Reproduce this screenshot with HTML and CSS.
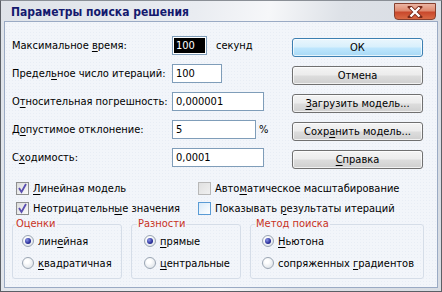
FILE: index.html
```html
<!DOCTYPE html>
<html lang="ru">
<head>
<meta charset="utf-8">
<title>Параметры поиска решения</title>
<link rel="stylesheet" href="styles.css">
</head>
<body>
<div class="window">
  <div class="titlebar">
    <div class="title">Параметры поиска решения</div>
    <div class="close">
      <svg width="16" height="12" viewBox="0 0 16 12"><path d="M3 1 L13 11 M13 1 L3 11" stroke="#7a2a1a" stroke-width="4" stroke-linecap="square"/><path d="M3.5 1.5 L12.5 10.5 M12.5 1.5 L3.5 10.5" stroke="#fff" stroke-width="2.4"/></svg>
    </div>
  </div>
  <div class="body">
    <div class="top">
      <div class="fields">
        <div class="row"><span class="label">Максимальное <u>в</u>ремя:</span><span class="input w1"><span class="sel">100</span></span><span class="unit">секунд</span></div>
        <div class="row"><span class="label">Предел<u>ь</u>ное число итераций:</span><span class="input w2">100</span></div>
        <div class="row"><span class="label">О<u>т</u>носительная погрешность:</span><span class="input w3">0,000001</span></div>
        <div class="row"><span class="label">Д<u>о</u>пустимое отклонение:</span><span class="input w4">5</span><span class="pct">%</span></div>
        <div class="row"><span class="label">С<u>х</u>одимость:</span><span class="input w3">0,0001</span></div>
      </div>
      <div class="buttons">
        <div class="btn default">ОК</div>
        <div class="btn">Отмена</div>
        <div class="btn"><u>З</u>агрузить модель...</div>
        <div class="btn">Сохр<u>а</u>нить модель...</div>
        <div class="btn"><u>С</u>правка</div>
      </div>
    </div>
    <div class="checks">
      <div class="col1">
        <div class="chk"><span class="box on"><svg width="11" height="11" viewBox="0 0 11 11"><path d="M2 5 L4.5 9 L9 1" fill="none" stroke="#5a4fb0" stroke-width="1.8"/></svg></span><span><u>Л</u>инейная модель</span></div>
        <div class="chk"><span class="box on"><svg width="11" height="11" viewBox="0 0 11 11"><path d="M2 5 L4.5 9 L9 1" fill="none" stroke="#5a4fb0" stroke-width="1.8"/></svg></span><span>Неотрицательн<u>ы</u>е значения</span></div>
      </div>
      <div class="col2">
        <div class="chk"><span class="box dis"></span><span>Авто<u>м</u>атическое масштабирование</span></div>
        <div class="chk"><span class="box hot"></span><span>Показывать <u>р</u>езультаты итераций</span></div>
      </div>
    </div>
    <div class="groups">
      <fieldset class="grp g1">
        <legend>Оценки</legend>
        <div class="rad"><span class="dot on"></span><span>лин<u>е</u>йная</span></div>
        <div class="rad"><span class="dot"></span><span><u>к</u>вадратичная</span></div>
      </fieldset>
      <fieldset class="grp g2">
        <legend>Разности</legend>
        <div class="rad"><span class="dot on"></span><span><u>п</u>рямые</span></div>
        <div class="rad"><span class="dot"></span><span><u>ц</u>ентральные</span></div>
      </fieldset>
      <fieldset class="grp g3">
        <legend>Метод поиска</legend>
        <div class="rad"><span class="dot on"></span><span><u>Н</u>ьютона</span></div>
        <div class="rad"><span class="dot"></span><span>сопряженных <u>г</u>радиентов</span></div>
      </fieldset>
    </div>
  </div>
</div>
</body>
</html>
```
FILE: styles.css
```css
* { box-sizing: border-box; }
html, body { margin: 0; padding: 0; }
body {
  width: 442px;
  height: 292px;
  overflow: hidden;
  font-family: "DejaVu Sans Condensed", "Liberation Sans", Arial, sans-serif;
  font-size: 11px;
  color: #000;
  background: #fff;
  white-space: nowrap;
}
u { text-decoration: underline; text-underline-offset: 2px; }
.window {
  width: 442px;
  height: 292px;
  border: 1px solid #5b5f66;
  border-top-color: #8a8f96;
  background: linear-gradient(100deg, #dfe3e9 0%, #e9ecf1 40%, #f6f7f9 55%, #dde1e7 70%, #d7dce3 100%);
  padding: 0 3px 3px 3px;
  display: flex;
  flex-direction: column;
}
.titlebar {
  height: 20px;
  display: flex;
  align-items: flex-start;
  justify-content: space-between;
  flex: none;
}
.title {
  padding-left: 7px;
  padding-top: 4px;
  font-weight: bold;
  font-size: 12px;
  line-height: 14px;
  color: #14196e;
}
.close {
  margin-top: 2px;
  margin-right: 2px;
  width: 42px;
  height: 17px;
  border: 1px solid #86402f;
  border-radius: 0 0 4px 4px;
  background: linear-gradient(#ebb5a3 0%, #df8a70 45%, #c9482c 55%, #d96a45 100%);
  display: flex;
  align-items: center;
  justify-content: center;
}
.body {
  flex: 1;
  border: 1px solid #9aaac4;
  background-color: #f2f5fa;
  background-image: radial-gradient(#e8edf5 0.6px, transparent 0.7px);
  background-size: 3px 3px;
  padding: 9px 0 0 7px;
}
.top { display: flex; }
.fields { width: 280px; display: flex; flex-direction: column; }
.row { height: 28px; display: flex; align-items: center; }
.label { width: 160px; flex: none; }
.input {
  height: 19px;
  border: 1px solid #7f9db9;
  background: #fff;
  padding-left: 3px;
  line-height: 17px;
}
.w1 { width: 35px; padding: 1px; }
.w2 { width: 50px; }
.w3 { width: 92px; }
.w4 { width: 84px; }
.sel {
  display: block;
  background: #000;
  color: #fff;
  height: 15px;
  line-height: 15px;
  padding-left: 2px;
}
.unit { margin-left: 9px; }
.pct { margin-left: 3px; }
.buttons {
  padding-top: 7px;
  display: flex;
  flex-direction: column;
  gap: 9px;
}
.btn {
  width: 131px;
  height: 19px;
  border: 1px solid #707070;
  border-radius: 3px;
  background: linear-gradient(#f4f4f4 0%, #ececec 45%, #dcdcdc 55%, #cfcfcf 100%);
  box-shadow: inset 0 0 0 1px rgba(255,255,255,0.7);
  text-align: center;
  line-height: 17px;
}
.btn.default {
  border-color: #3c7fb1;
  background: linear-gradient(#eaf6fd 0%, #d9f0fc 45%, #bee6fd 55%, #a7d9f5 100%);
}
.checks {
  display: flex;
  margin-top: 7px;
  padding-left: 4px;
}
.col1 { width: 182px; }
.chk { height: 20px; display: flex; align-items: center; }
.box {
  width: 13px;
  height: 13px;
  flex: none;
  margin-right: 4px;
  border: 1px solid #8e8f8f;
  background: linear-gradient(135deg, #dcdcdc, #fbfbfb);
  display: flex;
  align-items: center;
  justify-content: center;
}
.box.dis { border-color: #b8b8b8; background: linear-gradient(135deg, #e0e0e0, #f0f0f0); }
.box.hot { border-color: #5a9bd5; background: linear-gradient(135deg, #d8eaf9, #ffffff); }
.groups {
  display: flex;
  margin-top: 0;
  gap: 9px;
}
.grp {
  margin: 0;
  border: 1px solid #d5dde8;
  border-radius: 3px;
  padding: 0 0 1px 9px;
  height: 61px;
}
.grp legend {
  color: #c8321e;
  padding: 0 1px;
  margin-left: -7px;
  line-height: 12px;
}
.g1 { width: 110px; }
.g2 { width: 110px; padding-left: 12px; }
.g3 { width: 174px; padding-left: 11px; }
.rad { height: 22px; display: flex; align-items: center; }
.dot {
  width: 12px;
  height: 12px;
  flex: none;
  margin-right: 4px;
  border-radius: 50%;
  border: 1px solid #9aa5b3;
  background: radial-gradient(circle at 40% 35%, #ffffff 20%, #dfe4ea 80%);
  display: flex;
  align-items: center;
  justify-content: center;
}
.dot.on::after {
  content: "";
  width: 6px;
  height: 6px;
  border-radius: 50%;
  background: radial-gradient(circle at 35% 35%, #8c97e8 0%, #2a2f9a 60%, #141a6a 100%);
}
```
